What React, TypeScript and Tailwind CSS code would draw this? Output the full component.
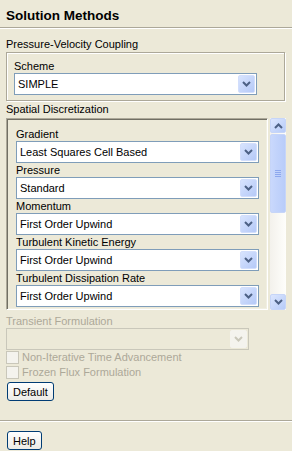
import React from 'react';

const font = { fontFamily: '"Liberation Sans", Arial, sans-serif' };

function Chevron({ up = false, color = '#4D6185' }: { up?: boolean; color?: string }) {
  return (
    <svg width="9" height="6" viewBox="0 0 9 6" className={up ? 'rotate-180' : ''}>
      <polyline points="1,1 4.5,4.5 8,1" fill="none" stroke={color} strokeWidth="2" />
    </svg>
  );
}

function ComboBox({ value, disabled = false }: { value?: string; disabled?: boolean }) {
  return (
    <div
      className={
        'flex items-center h-[22px] w-[243px] border ' +
        (disabled ? 'border-[#C9C7BA] bg-[#ECE9D8]' : 'border-[#7F9DB9] bg-white')
      }
    >
      <span className="flex-1 pl-[3px] leading-[20px] truncate text-black">{value}</span>
      <div
        className={
          'flex items-center justify-center w-[17px] h-[18px] mr-[1px] rounded-[2px] border ' +
          (disabled
            ? 'border-[#F4F3EE] bg-[#F4F3EE]'
            : 'border-[#D2DEFC] bg-gradient-to-br from-[#D8E4FE] to-[#B5C9F7]')
        }
      >
        <Chevron color={disabled ? '#C9C7BA' : '#4D6185'} />
      </div>
    </div>
  );
}

function Field({ label, value }: { label: string; value: string }) {
  return (
    <div>
      <div className="leading-[14px]">{label}</div>
      <ComboBox value={value} />
    </div>
  );
}

function ScrollBar() {
  return (
    <div className="flex flex-col w-[16px] h-[192px] bg-gradient-to-r from-[#F3F1EC] to-[#FEFEFB]">
      <div className="flex items-center justify-center h-[15px] rounded-[2px] border border-[#C6D5F8] bg-gradient-to-br from-[#DCE6FE] to-[#B6CBF8]">
        <Chevron up />
      </div>
      <div className="flex flex-col items-center justify-center gap-[1px] h-[79px] mt-[1px] rounded-[2px] border border-[#C6D5F8] bg-gradient-to-r from-[#C9D8FC] to-[#B8CCF9]">
        <div className="w-[6px] h-px bg-[#8DA8EE]" />
        <div className="w-[6px] h-px bg-[#8DA8EE]" />
        <div className="w-[6px] h-px bg-[#8DA8EE]" />
        <div className="w-[6px] h-px bg-[#8DA8EE]" />
      </div>
      <div className="flex-1" />
      <div className="flex items-center justify-center h-[16px] rounded-[2px] border border-[#C6D5F8] bg-gradient-to-br from-[#DCE6FE] to-[#B6CBF8]">
        <Chevron />
      </div>
    </div>
  );
}

function XpButton({ children }: { children: React.ReactNode }) {
  return (
    <button className="h-[19px] px-[5px] leading-[16px] text-black border border-[#003C74] rounded-[3px] bg-gradient-to-b from-white to-[#ECEBE6]">
      {children}
    </button>
  );
}

function Separator() {
  return (
    <div>
      <div className="h-px bg-[#ACA899]" />
      <div className="h-px bg-white" />
    </div>
  );
}

export default function App() {
  return (
    <div style={font} className="w-[292px] h-[451px] bg-[#ECE9D8] text-[11px] text-black overflow-hidden">
      <div className="h-[27px] pt-[8px] px-[6px] text-[13.5px] font-bold leading-[16px]">Solution Methods</div>
      <Separator />

      <div className="mt-[9px] px-[6px] leading-[13px]">Pressure-Velocity Coupling</div>
      <div className="mt-[1px] ml-[6px] w-[279px] border border-[#ACA899] shadow-[inset_1px_1px_0_white,1px_1px_0_white] pt-[6px] pb-[5px] pl-[7px]">
        <div className="leading-[14px]">Scheme</div>
        <ComboBox value="SIMPLE" />
      </div>

      <div className="mt-[2px] px-[6px] leading-[13px]">Spatial Discretization</div>
      <div className="flex gap-[2px] mt-[2px] ml-[6px]">
        <div className="w-[262px] h-[192px] overflow-hidden border border-t-[#ACA899] border-l-[#ACA899] border-r-white border-b-white shadow-[inset_1px_1px_0_#716F64,inset_-1px_-1px_0_#F1EFE2] pt-[8px] pl-[9px]">
          <Field label="Gradient" value="Least Squares Cell Based" />
          <Field label="Pressure" value="Standard" />
          <Field label="Momentum" value="First Order Upwind" />
          <Field label="Turbulent Kinetic Energy" value="First Order Upwind" />
          <Field label="Turbulent Dissipation Rate" value="First Order Upwind" />
        </div>
        <ScrollBar />
      </div>

      <div className="mt-[4px] px-[6px] leading-[14px] text-[#ACA899]">Transient Formulation</div>
      <div className="ml-[6px]">
        <ComboBox disabled />
      </div>

      <div className="px-[6px] text-[#ACA899]">
        <div className="flex items-center gap-[3px] h-[15px]">
          <div className="w-[13px] h-[13px] border border-[#C9C7BA] bg-[#F4F3EE]" />
          <span className="leading-[15px]">Non-Iterative Time Advancement</span>
        </div>
        <div className="flex items-center gap-[3px] h-[15px]">
          <div className="w-[13px] h-[13px] border border-[#C9C7BA] bg-[#F4F3EE]" />
          <span className="leading-[15px]">Frozen Flux Formulation</span>
        </div>
      </div>

      <div className="mt-[2px] px-[7px]">
        <XpButton>Default</XpButton>
      </div>

      <div className="mt-[19px]">
        <Separator />
      </div>

      <div className="mt-[9px] px-[7px]">
        <XpButton>Help</XpButton>
      </div>
    </div>
  );
}
